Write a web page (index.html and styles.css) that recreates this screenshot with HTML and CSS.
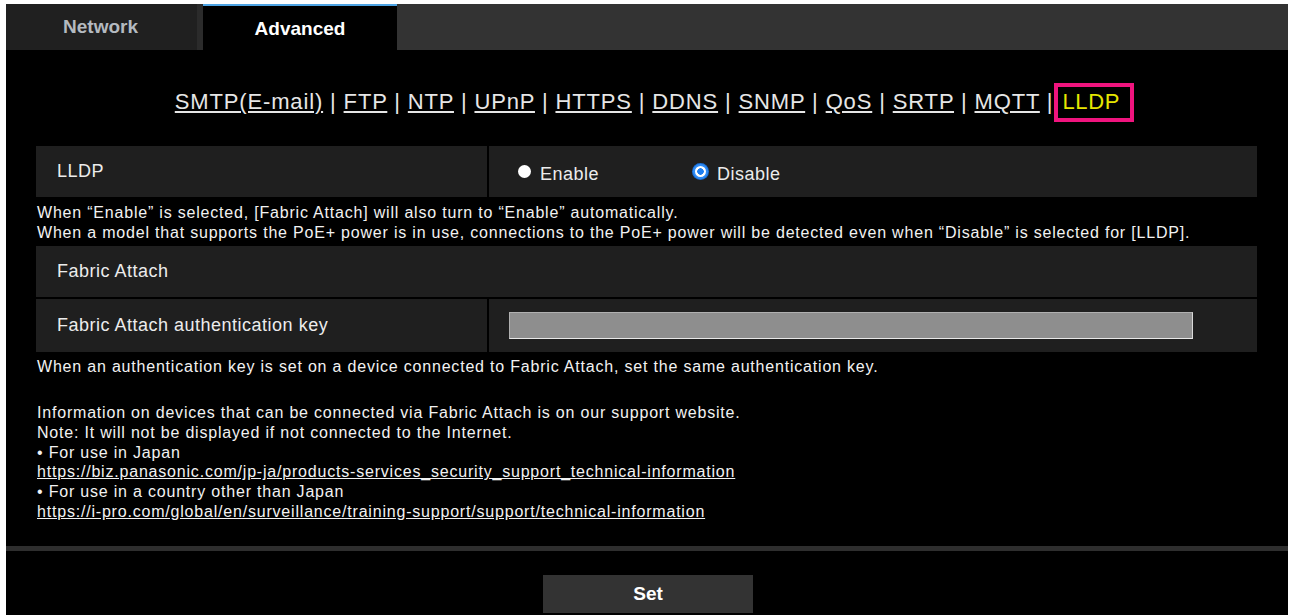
FILE: index.html
```html
<!DOCTYPE html>
<html lang="en">
<head>
<meta charset="utf-8">
<title>Advanced - LLDP</title>
<link rel="stylesheet" href="styles.css">
</head>
<body>
<div class="page">
  <div class="tabs">
    <div class="tab tab-off">Network</div>
    <div class="tab-gap"></div>
    <div class="tab tab-on">Advanced</div>
  </div>

  <div class="content">
    <nav class="subnav">
      <a href="#">SMTP(E-mail)</a> | <a href="#">FTP</a> | <a href="#">NTP</a> | <a href="#">UPnP</a> | <a href="#">HTTPS</a> | <a href="#">DDNS</a> | <a href="#">SNMP</a> | <a href="#">QoS</a> | <a href="#">SRTP</a> | <a href="#">MQTT</a> |<span class="current">LLDP</span>
    </nav>

    <div class="row">
      <div class="cell label">LLDP</div>
      <div class="cell value">
        <label class="opt"><span class="radio"></span>Enable</label>
        <label class="opt opt-2"><span class="radio radio-on"></span>Disable</label>
      </div>
    </div>
    <p class="note note-a">When “Enable” is selected, [Fabric Attach] will also turn to “Enable” automatically.<br>When a model that supports the PoE+ power is in use, connections to the PoE+ power will be detected even when “Disable” is selected for [LLDP].</p>

    <div class="row">
      <div class="cell label wide">Fabric Attach</div>
    </div>
    <div class="row row-gap">
      <div class="cell label">Fabric Attach authentication key</div>
      <div class="cell value">
        <input class="field" type="password" value="">
      </div>
    </div>
    <p class="note note-b">When an authentication key is set on a device connected to Fabric Attach, set the same authentication key.</p>

    <p class="info">Information on devices that can be connected via Fabric Attach is on our support website.<br>
      Note: It will not be displayed if not connected to the Internet.<br>
      • For use in Japan<br>
      <a href="#">https://biz.panasonic.com/jp-ja/products-services_security_support_technical-information</a><br>
      • For use in a country other than Japan<br>
      <a href="#">https://i-pro.com/global/en/surveillance/training-support/support/technical-information</a></p>
  </div>

  <div class="divider"></div>

  <div class="actions">
    <button class="btn" type="button">Set</button>
  </div>
</div>
</body>
</html>
```

FILE: styles.css
```css
html, body {
  margin: 0;
  background: #fff;
}

body {
  padding: 4px 2px 0 6px;
  font-family: "Liberation Sans", Arial, sans-serif;
  color: #ececec;
}

.page {
  background: #000;
  height: 611px;
  overflow: hidden;
}

/* tab strip */
.tabs {
  display: flex;
  height: 46px;
  background: #333;
}

.tab {
  font-weight: bold;
  font-size: 19px;
  display: flex;
  align-items: center;
  justify-content: center;
  box-sizing: border-box;
}

.tab-off {
  width: 191px;
  background: #202020;
  color: #b4bac0;
  padding-right: 2px;
}

.tab-gap {
  width: 6px;
  background: #2b2b2b;
}

.tab-on {
  width: 194px;
  background: #000;
  color: #fff;
  border-top: 2px solid #4ea4e4;
  padding-top: 1px;
}

/* main settings area */
.content {
  padding: 0 31px 0 30px;
}

.subnav {
  text-align: center;
  font-size: 22px;
  letter-spacing: 0.85px;
  color: #e6e6e6;
  padding: 34px 0 0 16px;
  height: 62px;
  box-sizing: border-box;
  line-height: 26px;
  margin-bottom: 34px;
}

.subnav a {
  color: #e6e6e6;
  text-decoration: underline;
}

.subnav .current {
  display: inline-block;
  color: #e6e600;
  border: 4px solid #f0147e;
  padding: 2px 10px 3px 4px;
  margin-left: 1px;
  line-height: 26px;
  letter-spacing: 0.7px;
  vertical-align: middle;
  position: relative;
  top: -1px;
}

.row {
  display: flex;
  gap: 2px;
  height: 51px;
}

.row-gap {
  margin-top: 2px;
  height: 53px;
}

.cell {
  background: #1f1f1f;
  display: flex;
  align-items: center;
  font-size: 18px;
  letter-spacing: 0.5px;
}

.label {
  width: 451px;
  padding-left: 21px;
  box-sizing: border-box;
  color: #ececec;
}

.label.wide {
  width: 100%;
}

.value {
  flex: 1;
  padding-left: 29px;
}

.opt {
  display: flex;
  align-items: center;
  gap: 9px;
  font-size: 18px;
  letter-spacing: 0.5px;
  padding-top: 5px;
}

.opt-2 {
  margin-left: 94px;
}

.radio {
  width: 13px;
  height: 13px;
  border-radius: 50%;
  background: #fff;
  position: relative;
  top: -3px;
}

.radio-on {
  width: 15px;
  height: 15px;
  box-sizing: border-box;
  border: 2px solid #2f8cf5;
  box-shadow: 0 0 0 1px #1a6fd6;
  background: #fff radial-gradient(circle, #1f7ff0 0 3px, transparent 3.5px);
}

.field {
  width: 684px;
  height: 27px;
  box-sizing: border-box;
  background: #8e8e8e;
  border: 1px solid #b0b0b0;
  border-bottom-color: #e8e8e8;
  border-right-color: #d8d8d8;
  margin-left: -9px;
}

.note {
  margin: 0;
  font-size: 16px;
  letter-spacing: 0.8px;
  line-height: 20px;
  color: #f2f2f2;
  padding-left: 1px;
}

.note-a {
  padding-top: 6px;
  height: 49px;
  box-sizing: border-box;
}

.note-b {
  padding-top: 5px;
}

.info {
  margin: 26px 0 0;
  padding-left: 1px;
  font-size: 16px;
  letter-spacing: 0.8px;
  line-height: 19.8px;
  color: #f2f2f2;
}

.info a {
  color: #f2f2f2;
  text-decoration: underline;
}

.divider {
  margin-top: 24px;
  height: 5px;
  background: #2e2e2e;
}

.actions {
  display: flex;
  justify-content: center;
  padding-top: 24px;
}

.btn {
  width: 210px;
  height: 38px;
  background: #333;
  border: 0;
  color: #fff;
  font-family: "Liberation Sans", Arial, sans-serif;
  font-weight: bold;
  font-size: 19px;
  margin-left: 2px;
}
```
